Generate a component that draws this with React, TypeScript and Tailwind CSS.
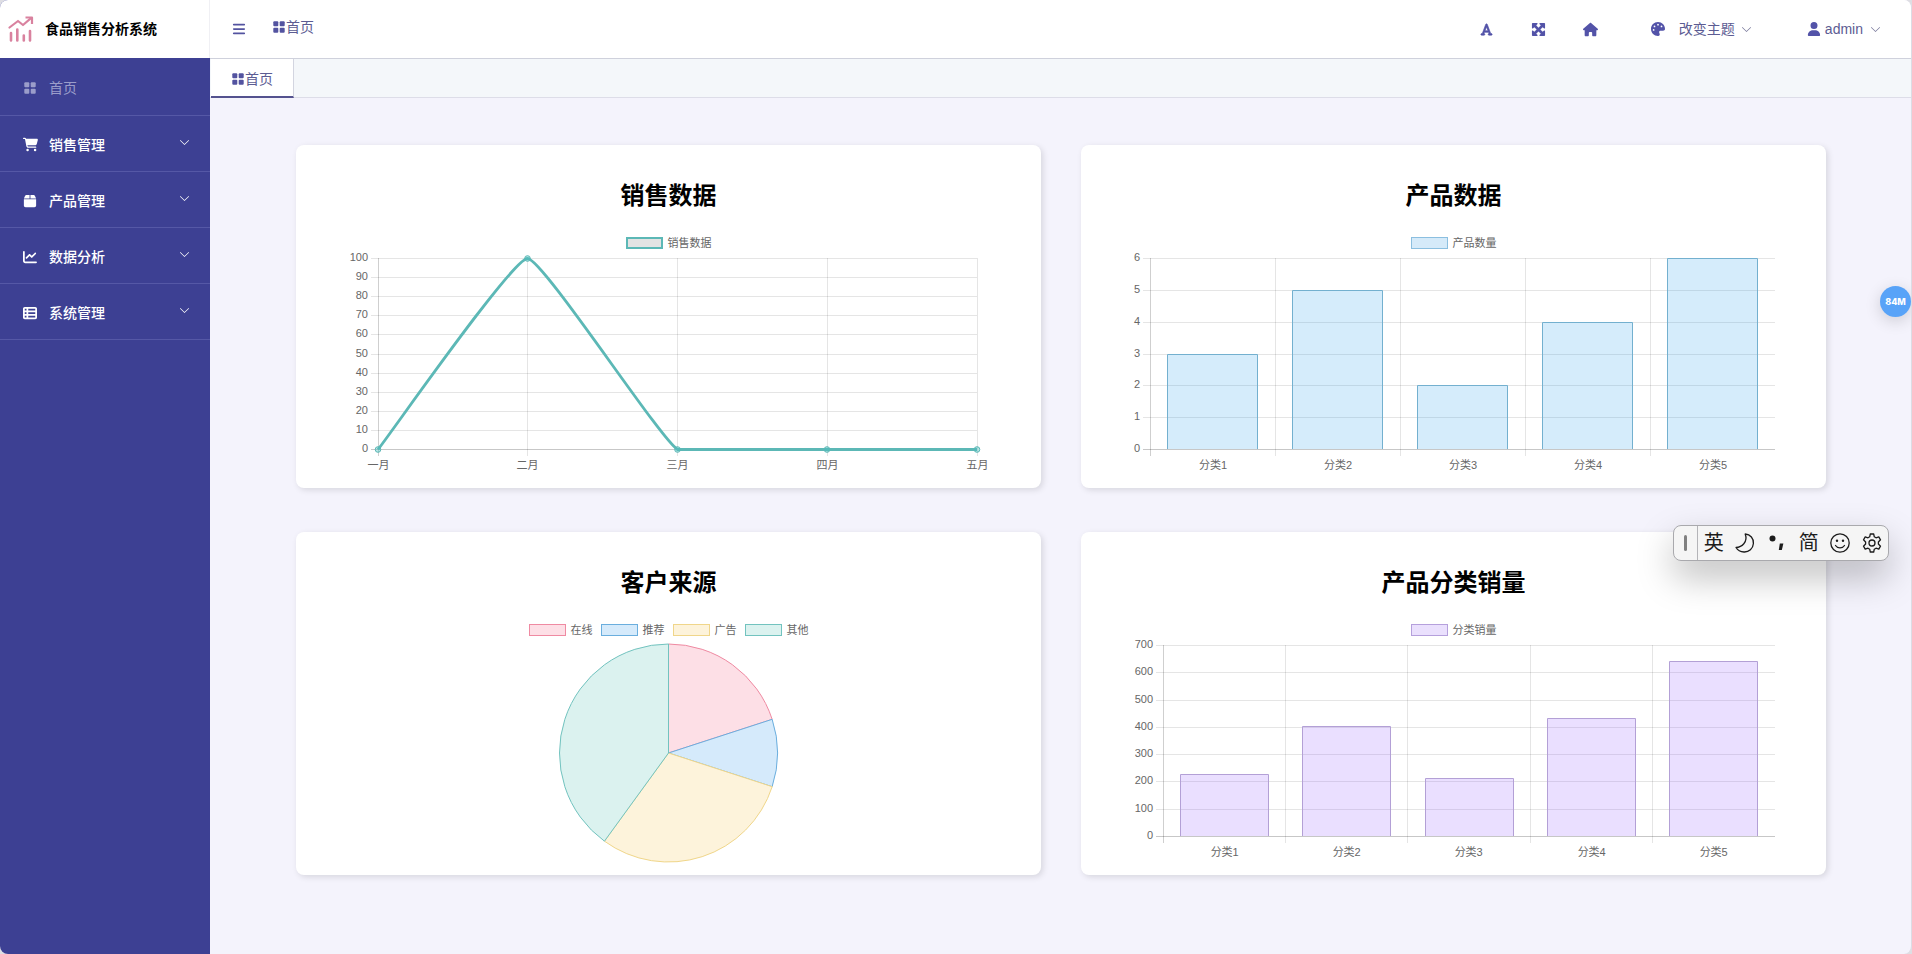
import type { ReactNode } from "react";
import {
  FaBars,
  FaBox,
  FaCartShopping,
  FaChartLine,
  FaFont,
  FaHouse,
  FaMaximize,
  FaPalette,
  FaTableList,
  FaUser,
} from "react-icons/fa6";
import { BsChevronDown } from "react-icons/bs";

const PLOT_W = 643;
const PLOT_H = 225;
const PLOT_TOP = 7;
const PLOT_BOTTOM = 198;

const menuItems = [
  { label: "销售管理", icon: <FaCartShopping size={15} /> },
  { label: "产品管理", icon: <FaBox size={14} /> },
  { label: "数据分析", icon: <FaChartLine size={14} /> },
  { label: "系统管理", icon: <FaTableList size={14} /> },
];

const months = ["一月", "二月", "三月", "四月", "五月"];
const categories = ["分类1", "分类2", "分类3", "分类4", "分类5"];

const sources = [
  { label: "在线", value: 20, fill: "#fddfe6", stroke: "#ef8aa2", swatch: "border-[#ef8aa2] bg-[#fddfe6]" },
  { label: "推荐", value: 10, fill: "#d5eafb", stroke: "#6aaede", swatch: "border-[#6aaede] bg-[#d5eafb]" },
  { label: "广告", value: 30, fill: "#fdf3db", stroke: "#f0d68a", swatch: "border-[#f0d68a] bg-[#fdf3db]" },
  { label: "其他", value: 40, fill: "#dbf2ef", stroke: "#72c3bf", swatch: "border-[#72c3bf] bg-[#dbf2ef]" },
];

function GridIcon({ className }: { className?: string }) {
  return (
    <svg viewBox="0 0 12 12" width="12" height="12" fill="currentColor" className={className}>
      <rect x="0.3" y="0.3" width="5" height="5" rx="1" />
      <rect x="6.7" y="0.3" width="5" height="5" rx="1" />
      <rect x="0.3" y="6.7" width="5" height="5" rx="1" />
      <rect x="6.7" y="6.7" width="5" height="5" rx="1" />
    </svg>
  );
}

function Logo() {
  return (
    <svg viewBox="0 0 26 26" width="26" height="26" fill="none" stroke="#d9829f" strokeWidth="2.2">
      <path d="M1.500 11.500 10 5l5 4 8-6.800" strokeLinejoin="round" strokeLinecap="round" />
      <path d="M17.500 1.500H24V8" strokeLinejoin="round" />
      <path d="M3 17v7.500M9.300 13.500v11M15.800 19.500v5M22 15v9.500" strokeWidth="2.6" strokeLinecap="round" />
    </svg>
  );
}

function Sidebar() {
  return (
    <aside className="flex w-[210px] shrink-0 flex-col bg-[#3d4093]">
      <div className="flex h-[58px] items-center gap-[11px] border-r border-[#f0f0f4] bg-white pl-2">
        <Logo />
        <span className="whitespace-nowrap text-sm font-bold text-black">食品销售分析系统</span>
      </div>
      <nav>
        <a
          href="#"
          className="flex h-[58px] items-center border-b border-[#5558a6] pl-[24px] pt-0.5 text-sm text-[#9b9dca]"
        >
          <GridIcon className="mr-[13px]" />
          首页
        </a>
        {menuItems.map((item) => (
          <button
            key={item.label}
            type="button"
            className="flex h-[56px] w-full items-center border-b border-[#5558a6] pl-[22px] pr-5 pt-0.5 text-sm font-medium text-white"
          >
            <span className="mr-[11px] flex w-4 justify-center">{item.icon}</span>
            {item.label}
            <BsChevronDown size={11} className="mb-1 ml-auto" />
          </button>
        ))}
      </nav>
    </aside>
  );
}

function Header() {
  return (
    <header className="flex h-[59px] items-center border-b border-[#cfd1dc] bg-white pl-[22px] pr-[30px] text-sm text-[#5c5c93]">
      <button type="button" aria-label="菜单" className="text-[#5353a0]">
        <FaBars size={14} />
      </button>
      <a href="#" className="mb-1 ml-[27px] flex items-center gap-px">
        <GridIcon className="text-[#5353a0]" />
        首页
      </a>
      <div className="ml-auto flex items-center text-[#5353a8]">
        <button type="button" aria-label="字体" className="mr-[38px]">
          <FaFont size={13} stroke="currentColor" strokeWidth={24} />
        </button>
        <button type="button" aria-label="全屏" className="mr-[37px]">
          <FaMaximize size={15} />
        </button>
        <button type="button" aria-label="主页" className="mr-[53px]">
          <FaHouse size={15} />
        </button>
        <button type="button" className="mr-[55px] flex items-center">
          <FaPalette size={14} className="mr-[14px]" />
          <span className="text-[#5c5c93]">改变主题</span>
          <BsChevronDown size={11} className="ml-[6px] text-[#77779a]" />
        </button>
        <button type="button" className="flex items-center">
          <FaUser size={14} className="mr-1" />
          <span className="text-[#5c5c93]">admin</span>
          <BsChevronDown size={11} className="ml-[7px] text-[#77779a]" />
        </button>
      </div>
    </header>
  );
}

function ChartCard({ title, legend, children }: { title: string; legend: ReactNode; children: ReactNode }) {
  return (
    <section className="rounded-lg bg-white px-[51px] pb-3 pt-[33px] shadow-[2px_2px_6px_rgba(0,0,0,0.12)]">
      <h2 className="text-center text-2xl/9 font-bold text-black">{title}</h2>
      <div className="mt-[21px] flex h-4 items-center justify-center gap-2">{legend}</div>
      {children}
    </section>
  );
}

function LegendItem({ label, swatch }: { label: string; swatch: string }) {
  return (
    <span className="flex items-center gap-[5px] text-[11px]/4 text-[#666]">
      <span className={`h-3 w-[37px] border ${swatch}`} />
      {label}
    </span>
  );
}

type AxesProps = {
  left: number;
  right: number;
  max: number;
  step: number;
  labels: string[];
  centered?: boolean;
};

function Axes({ left, right, max, step, labels, centered }: AxesProps) {
  const ticks = Array.from({ length: max / step + 1 }, (_, i) => i * step);
  const slot = (right - left) / (centered ? labels.length : labels.length - 1);
  return (
    <g fontSize="11" fill="#666">
      {ticks.map((t) => {
        const y = Math.round(PLOT_BOTTOM - (t / max) * (PLOT_BOTTOM - PLOT_TOP)) + 0.5;
        return (
          <g key={t}>
            <line x1={left - 7} x2={right} y1={y} y2={y} stroke={t === 0 ? "#00000038" : "#0000001a"} />
            <text x={left - 10} y={y + 2.5} textAnchor="end">
              {t}
            </text>
          </g>
        );
      })}
      {labels.map((label, i) => {
        const x = Math.floor(left + slot * i) + 0.5;
        return (
          <g key={label}>
            <line
              x1={x}
              x2={x}
              y1={PLOT_TOP}
              y2={PLOT_BOTTOM + 7}
              stroke={i === 0 ? "#00000030" : "#0000001a"}
            />
            <text x={centered ? x + slot / 2 : x} y={PLOT_BOTTOM + 20} textAnchor="middle">
              {label}
            </text>
          </g>
        );
      })}
    </g>
  );
}

function LineChart() {
  return (
    <svg viewBox={`0 0 ${PLOT_W} ${PLOT_H}`} className="block w-full overflow-visible">
      <Axes left={31} right={630} max={100} step={10} labels={months} />
      <path
        d="M31 198.5C46 179.500 165.500 7.500 180.500 7.500C195.500 7.500 312 186.500 330.500 198.500C342 198.500 465 198.500 480 198.500L630 198.500"
        fill="none"
        stroke="#5cb8b6"
        strokeWidth="2.8"
      />
      {[31, 180.5, 330.5, 480, 630].map((x, i) => (
        <circle
          key={x}
          cx={x}
          cy={i === 1 ? 7.5 : 198.5}
          r="2.8"
          fill="#4bc0c066"
          stroke="#5cb8b6"
        />
      ))}
    </svg>
  );
}

type BarChartProps = {
  left: number;
  max: number;
  step: number;
  values: number[];
  fill: string;
  stroke: string;
};

function BarChart({ left, max, step, values, fill, stroke }: BarChartProps) {
  const slot = (PLOT_W - left) / values.length;
  const barWidth = Math.round(slot * 0.72);
  return (
    <svg viewBox={`0 0 ${PLOT_W} ${PLOT_H}`} className="block w-full overflow-visible">
      <Axes left={left} right={PLOT_W} max={max} step={step} labels={categories} centered />
      {values.map((v, i) => {
        const x = Math.floor(left + slot * i + (slot - barWidth) / 2) + 0.5;
        const y = Math.round(PLOT_BOTTOM - (v / max) * (PLOT_BOTTOM - PLOT_TOP)) + 0.5;
        return (
          <g key={i}>
            <rect x={x} y={y} width={barWidth} height={PLOT_BOTTOM - y} fill={fill} />
            <path
              d={`M${x} ${PLOT_BOTTOM}V${y}h${barWidth}V${PLOT_BOTTOM}`}
              fill="none"
              stroke={stroke}
            />
          </g>
        );
      })}
    </svg>
  );
}

function PieChart() {
  const cx = PLOT_W / 2;
  const cy = 115;
  const r = 109;
  const point = (pct: number) => {
    const a = (pct / 100) * Math.PI * 2 - Math.PI / 2;
    return `${cx + r * Math.cos(a)} ${cy + r * Math.sin(a)}`;
  };
  let start = 0;
  return (
    <svg viewBox={`0 0 ${PLOT_W} ${PLOT_H}`} className="block w-full overflow-visible">
      {sources.map((s) => {
        const from = start;
        start += s.value;
        return (
          <path
            key={s.label}
            d={`M${cx} ${cy}L${point(from)}A${r} ${r} 0 0 1 ${point(start)}Z`}
            fill={s.fill}
            stroke={s.stroke}
            strokeLinejoin="round"
          />
        );
      })}
    </svg>
  );
}

// Barra flotante del teclado
function InputBar() {
  return (
    <div className="absolute right-[22px] top-[525px] flex h-9 w-[216px] items-center rounded-lg border border-[#a9a9ad] bg-[#f5f5f5] text-[#1c1c1c] shadow-[0_16px_36px_rgba(0,0,0,0.26)]">
      <div className="flex h-full w-6 items-center justify-center border-r border-[#b4b4b8]">
        <span className="h-4 w-[3px] rounded-full bg-[#808080]" />
      </div>
      <div className="grid flex-1 grid-cols-6 items-center justify-items-center text-xl/8">
        <button type="button">英</button>
        <button type="button" aria-label="月亮">
          <svg viewBox="0 0 20 20" width="20" height="20" fill="none" stroke="currentColor" strokeWidth="1.3">
            <path
              d="M10.200 1C15.400 1.400 18.800 5.500 18.400 10.500C18 15.800 14 19.200 9 19C5.600 18.800 2.700 17.300 1 14.500C6.500 14.200 13.300 9.200 10.200 1Z"
              strokeLinejoin="round"
            />
          </svg>
        </button>
        <button type="button" aria-label="标点">
          <svg viewBox="0 0 20 20" width="20" height="20" fill="currentColor">
            <circle cx="5.500" cy="5.500" r="3" />
            <path d="M12.800 10.500h3.600l-1.600 6.500h-3z" />
          </svg>
        </button>
        <button type="button">简</button>
        <button type="button" aria-label="表情">
          <svg viewBox="0 0 20 20" width="20" height="20" fill="none" stroke="currentColor" strokeWidth="1.3">
            <circle cx="10" cy="10" r="9.200" />
            <path d="M5.500 12.500c2 3.200 7 3.200 9 0" strokeLinecap="round" />
            <circle cx="7" cy="7.700" r="1.200" fill="currentColor" stroke="none" />
            <circle cx="13" cy="7.700" r="1.200" fill="currentColor" stroke="none" />
          </svg>
        </button>
        <button type="button" aria-label="设置">
          <svg viewBox="0 0 20 20" width="20" height="20" fill="none" stroke="currentColor" strokeWidth="1.3">
            <path
              d="M8.300 1h3.400l.6 2.800 1.700 1 2.800-.9 1.700 2.900L16.400 9v2l2.100 2.200-1.700 2.900-2.800-.9-1.700 1-.6 2.800H8.300l-.6-2.800-1.700-1-2.800.9-1.700-2.900L3.600 11V9L1.500 6.800l1.700-2.900 2.800.9 1.700-1z"
              strokeLinejoin="round"
            />
            <circle cx="10" cy="10" r="3" />
          </svg>
        </button>
      </div>
    </div>
  );
}

export default function App() {
  return (
    <div className="bg-[#dedee3] font-['Liberation_Sans','Noto_Sans_CJK_SC',sans-serif]">
      <div className="relative flex min-h-screen overflow-hidden rounded-lg border-r border-[#dcdce4] bg-[#f4f3fc]">
        <Sidebar />
        <div className="min-w-0 flex-1">
          <Header />
          <div className="flex h-[39px] border-b border-[#dddde8] bg-[#f4f7fa] pl-px">
            <a
              href="#"
              className="-mb-px flex items-center gap-px border-b-2 border-r border-b-[#54528f] border-r-[#d3d5e0] bg-white pl-[21px] pr-5 pt-0.5 text-sm text-[#5c5c93]"
            >
              <GridIcon className="text-[#5353a0]" />
              首页
            </a>
          </div>
          <main className="grid grid-cols-2 gap-x-10 gap-y-11 py-[47px] pl-[86px] pr-[85px]">
            <ChartCard
              title="销售数据"
              legend={<LegendItem label="销售数据" swatch="border-2 border-[#5cb8b6] bg-[#e3e3e3]" />}
            >
              <LineChart />
            </ChartCard>
            <ChartCard
              title="产品数据"
              legend={<LegendItem label="产品数量" swatch="border-[#8bbfe0] bg-[#d5eaf9]" />}
            >
              <BarChart
                left={18}
                max={6}
                step={1}
                values={[3, 5, 2, 4, 6]}
                fill="#36a2eb35"
                stroke="#73b0cf"
              />
            </ChartCard>
            <ChartCard
              title="客户来源"
              legend={sources.map((s) => (
                <LegendItem key={s.label} label={s.label} swatch={s.swatch} />
              ))}
            >
              <PieChart />
            </ChartCard>
            <ChartCard
              title="产品分类销量"
              legend={<LegendItem label="分类销量" swatch="border-[#b5a0dc] bg-[#eae0fd]" />}
            >
              <BarChart
                left={31}
                max={700}
                step={100}
                values={[226, 403, 212, 431, 641]}
                fill="#9966ff35"
                stroke="#b3a0d6"
              />
            </ChartCard>
          </main>
        </div>
        <div className="absolute right-0 top-[286px] flex size-[31px] items-center justify-center rounded-full bg-[#58a3f8] font-[Inter] text-[9px] font-extrabold text-white shadow-[0_4px_16px_rgba(0,0,0,0.16)]">
          84M
        </div>
        <InputBar />
      </div>
    </div>
  );
}
